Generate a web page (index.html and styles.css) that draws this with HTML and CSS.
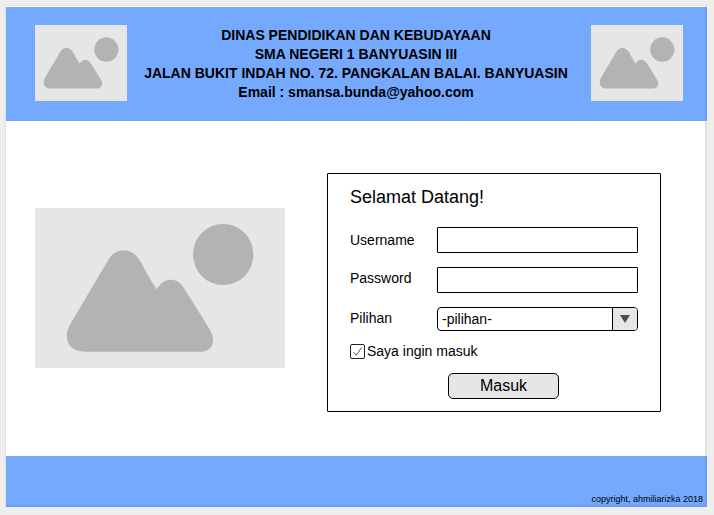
FILE: index.html
```html
<!DOCTYPE html>
<html lang="id">
<head>
<meta charset="utf-8">
<title>SMA Negeri 1 Banyuasin III</title>
<link rel="stylesheet" href="styles.css">
</head>
<body>
<svg class="defs" aria-hidden="true">
  <defs>
    <g id="picture">
      <path d="M51.7 143.800C39 143.800 31.800 138 31.800 128C31.800 124 33 120 35.300 116.300L72.300 53.500C76.500 46 82 42.300 88.700 42.300C95.500 42.300 101 46 105.700 53.700C108.500 59.500 113 68 121.700 81.300C125.500 75 130 71.700 135.700 71.700C141 71.700 145 74 148.500 79.500C157 93 166.500 107.500 175 122C177 125.500 178 129 178 132.700C178 139.500 173 143.800 164 143.800Z"/>
      <ellipse cx="188.200" cy="46.500" rx="30.200" ry="30.600"/>
    </g>
  </defs>
</svg>
<div class="page">
  <header class="header">
    <svg class="picture logo" viewBox="10 -15 230 190"><use href="#picture"/></svg>
    <div class="school">
      <div class="line">DINAS PENDIDIKAN DAN KEBUDAYAAN</div>
      <div class="line">SMA NEGERI 1 BANYUASIN III</div>
      <div class="line">JALAN BUKIT INDAH NO. 72. PANGKALAN BALAI. BANYUASIN</div>
      <div class="line">Email : smansa.bunda@yahoo.com</div>
    </div>
    <svg class="picture logo" viewBox="10 -15 230 190"><use href="#picture"/></svg>
  </header>
  <main class="main">
    <svg class="picture hero" viewBox="0 0 250 160"><use href="#picture"/></svg>
    <form class="login">
      <h1 class="title">Selamat Datang!</h1>
      <div class="row username"><label for="user">Username</label><input id="user" class="field" type="text"></div>
      <div class="row password"><label for="pass">Password</label><input id="pass" class="field" type="password"></div>
      <div class="row choice"><span class="label">Pilihan</span>
        <div class="select"><span class="value">-pilihan-</span><span class="arrow"><svg width="10" height="8" viewBox="0 0 10 8"><path d="M0 0H10L5 8Z"/></svg></span></div>
      </div>
      <div class="agree">
        <svg class="check" width="15" height="15" viewBox="0 0 15 15"><rect x=".5" y=".5" width="14" height="14" rx="1.500"/><path class="tick" d="M3.500 8L6.300 11.300L11.500 3.500"/></svg>
        <span>Saya ingin masuk</span>
      </div>
      <button class="submit" type="button">Masuk</button>
    </form>
  </main>
  <footer class="footer">copyright, ahmiliarizka 2018</footer>
</div>
</body>
</html>
```
FILE: styles.css
```css
* { box-sizing: border-box; }
body {
  margin: 0;
  padding: 5px;
  height: 515px;
  overflow: hidden;
  background: #eee;
  color: #000;
  font-family: "Liberation Sans", Arial, sans-serif;
}
.defs { display: block; width: 0; height: 0; }
.page {
  width: 702px;
  height: 502px;
  border: 2px solid #e2e2e2;
  border-width: 1px 2px 0 1px;
  padding-top: 1px;
  background: #fff;
}
.header {
  display: flex;
  align-items: flex-start;
  width: 701px;
  height: 114px;
  padding: 18px 22px 0 29px;
  background: #75a9fd;
  border-right: 2px solid #6b9df0;
}
.picture { display: block; flex: none; background: #e6e6e6; fill: #b3b3b3; }
.logo { width: 92px; height: 76px; }
.school { flex: 1; padding: 1px 6px 0 0; text-align: center; font-size: 14px; font-weight: bold; line-height: 19px; white-space: nowrap; }
.main { display: flex; align-items: flex-start; height: 335px; padding-left: 29px; }
.hero { width: 250px; height: 160px; margin-top: 87px; }
.login {
  width: 334px;
  height: 239px;
  margin: 52px 0 0 42px;
  padding: 13px 22px 0;
  border: 1px solid #000;
  border-radius: 1px;
  font-size: 14px;
}
.title { margin: 0; font-size: 18px; font-weight: normal; line-height: 20px; }
.row { display: flex; height: 26px; line-height: 16px; }
.row label, .row .label { width: 87px; }
.username { margin-top: 20px; }
.username label { padding-top: 5px; }
.password { margin-top: 14px; }
.password label { padding-top: 3px; }
.choice { margin-top: 14px; height: 24px; }
.choice .label { padding-top: 3px; }
.field { width: 201px; height: 26px; padding: 0 5px; border: 1px solid #000; border-radius: 1px; background: #fff; outline: 0; }
.select { display: flex; width: 201px; height: 24px; border: 1px solid #000; border-radius: 4px; overflow: hidden; }
.value { flex: 1; padding-left: 4px; line-height: 23px; }
.arrow { display: flex; justify-content: center; width: 25px; padding-top: 7px; border-left: 1px solid #000; background: #e6e6e6; fill: #4d4d4d; }
.agree { display: flex; gap: 2px; height: 16px; margin-top: 12px; line-height: 16px; }
.check { flex: none; margin-top: 1px; fill: none; stroke: #222; }
.tick { stroke: #555; }
.submit {
  display: block;
  width: 111px;
  height: 26px;
  margin: 14px 0 0 98px;
  padding: 0 0 1px;
  border: 1px solid #000;
  border-radius: 5px;
  background: #e6e6e6;
  color: #000;
  font: 16px "Liberation Sans", Arial, sans-serif;
}
.footer {
  width: 701px;
  height: 51px;
  padding: 37px 2px 0 0;
  background: #75a9fd;
  border-right: 2px solid #6b9df0;
  border-bottom: 2px solid #6b9df0;
  font-size: 9px;
  line-height: 12px;
  text-align: right;
}
```
